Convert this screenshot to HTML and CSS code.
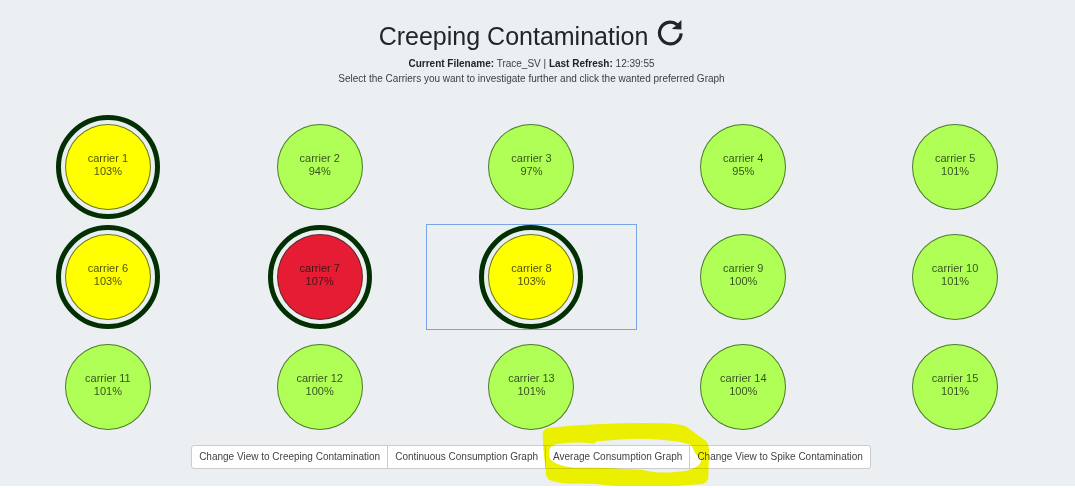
FILE: index.html
```html
<!DOCTYPE html>
<html lang="en">
<head>
<meta charset="utf-8">
<meta name="viewport" content="width=device-width, initial-scale=1">
<title>Creeping Contamination</title>
<link rel="stylesheet" href="styles.css">
</head>
<body>
<main class="page">
  <header class="header">
    <div class="title-row">
      <h1 class="title">Creeping Contamination</h1>
      <button class="refresh" type="button" aria-label="Refresh">
        <svg class="refresh-icon" viewBox="0 0 28 28" width="28" height="28" aria-hidden="true">
          <path d="M21.2 6.7A10.8 10.8 0 1 0 25.1 15.4" fill="none" stroke="#212529" stroke-width="3.2"/>
          <path d="M25.4 2V11.4L16 11Q17 9.5 19.5 8.2L21.8 5.4Z" fill="#212529"/>
        </svg>
      </button>
    </div>
    <p class="line"><b>Current Filename:</b> Trace_SV | <b>Last Refresh:</b> 12:39:55</p>
    <p class="line">Select the Carriers you want to investigate further and click the wanted preferred Graph</p>
  </header>
  <section class="carriers" aria-label="Carriers">
    <button class="carrier" type="button" aria-pressed="true"><span class="ring"><span class="disc warn">carrier 1<br>103%</span></span></button>
    <button class="carrier" type="button" aria-pressed="false"><span class="ring"><span class="disc">carrier 2<br>94%</span></span></button>
    <button class="carrier" type="button" aria-pressed="false"><span class="ring"><span class="disc">carrier 3<br>97%</span></span></button>
    <button class="carrier" type="button" aria-pressed="false"><span class="ring"><span class="disc">carrier 4<br>95%</span></span></button>
    <button class="carrier" type="button" aria-pressed="false"><span class="ring"><span class="disc">carrier 5<br>101%</span></span></button>
    <button class="carrier" type="button" aria-pressed="true"><span class="ring"><span class="disc warn">carrier 6<br>103%</span></span></button>
    <button class="carrier" type="button" aria-pressed="true"><span class="ring"><span class="disc alarm">carrier 7<br>107%</span></span></button>
    <button class="carrier focused" type="button" aria-pressed="true"><span class="ring"><span class="disc warn">carrier 8<br>103%</span></span></button>
    <button class="carrier" type="button" aria-pressed="false"><span class="ring"><span class="disc">carrier 9<br>100%</span></span></button>
    <button class="carrier" type="button" aria-pressed="false"><span class="ring"><span class="disc">carrier 10<br>101%</span></span></button>
    <button class="carrier" type="button" aria-pressed="false"><span class="ring"><span class="disc">carrier 11<br>101%</span></span></button>
    <button class="carrier" type="button" aria-pressed="false"><span class="ring"><span class="disc">carrier 12<br>100%</span></span></button>
    <button class="carrier" type="button" aria-pressed="false"><span class="ring"><span class="disc">carrier 13<br>101%</span></span></button>
    <button class="carrier" type="button" aria-pressed="false"><span class="ring"><span class="disc">carrier 14<br>100%</span></span></button>
    <button class="carrier" type="button" aria-pressed="false"><span class="ring"><span class="disc">carrier 15<br>101%</span></span></button>
  </section>
  <nav class="actions" aria-label="Graphs">
    <button class="action" type="button">Change View to Creeping Contamination</button>
    <button class="action" type="button">Continuous Consumption Graph</button>
    <div class="marked">
      <button class="action" type="button">Average Consumption Graph</button>
      <svg class="marker" viewBox="36 24 504 195" width="168" height="65" aria-hidden="true">
        <path fill="#eef200" fill-rule="evenodd" d="M38 52Q42 40 60 38Q130 31 200 28Q310 22 400 25Q445 26 467 34Q500 58 528 78Q538 88 537 115L535 188Q532 205 510 208Q440 213 380 217Q310 217 250 212Q180 204 120 206Q75 205 55 193Q45 183 48 165Q38 105 38 52ZM57 112Q59 92 77 88Q130 78 192 86L200 79Q270 72 330 71Q390 72 430 78Q468 82 486 93Q495 120 512 132Q517 142 504 152Q480 168 445 170Q400 175 365 170Q325 161 290 163Q250 158 200 158Q145 160 110 155Q75 148 63 135Q56 126 57 112Z"/>
      </svg>
    </div>
    <button class="action" type="button">Change View to Spike Contamination</button>
  </nav>
</main>
</body>
</html>
```
FILE: styles.css
```css
body {
  margin: 0;
  background: #fff;
  color: #212529;
  font: 10px/15px "Liberation Sans", Arial, sans-serif;
}

button {
  font: inherit;
  color: inherit;
  cursor: pointer;
}

.page {
  padding: 18px 14px 17px 2px;
  background: #ebeff2;
}

.header {
  margin-bottom: 28px;
  text-align: center;
}

.title-row {
  display: flex;
  justify-content: center;
  gap: 8px;
  margin-bottom: 2px;
}

.title {
  margin: 0;
  font-size: 25px;
  font-weight: 400;
  line-height: 36px;
}

.refresh {
  height: 28px;
  padding: 0;
  border: 0;
  background: none;
}

.refresh-icon {
  display: block;
}

.line {
  margin: 0;
  color: #3c4043;
}

.line b {
  color: #212529;
}

.carriers {
  display: grid;
  grid-template-columns: repeat(5, 1fr);
  row-gap: 4px;
}

.carrier {
  display: flex;
  justify-content: center;
  padding: 1px;
  border: 0;
  background: none;
  font-size: 11px;
  line-height: 13px;
}

.focused {
  outline: 1px solid #78a5e8;
  outline-offset: -1px;
}

.ring {
  padding: 4px;
  border: 5px solid transparent;
  border-radius: 50%;
}

.carrier[aria-pressed="true"] .ring {
  border-color: #033003;
}

.disc {
  display: flex;
  flex-direction: column;
  justify-content: center;
  box-sizing: border-box;
  width: 86px;
  height: 86px;
  padding-bottom: 4px;
  border: 1px solid rgba(25, 50, 25, 0.65);
  border-radius: 50%;
  background: #b0ff57;
  color: rgba(10, 20, 10, 0.75);
}

.warn {
  background: #ff0;
}

.alarm {
  background: #e51c34;
}

.actions {
  display: flex;
  justify-content: center;
  margin-top: 5px;
}

.action {
  margin-left: -1px;
  padding: 3px 7px 4px;
  border: 1px solid #ccc;
  background: #fff;
  color: #444;
  white-space: nowrap;
}

.action:first-child {
  border-radius: 3px 0 0 3px;
}

.marked .action {
  border-radius: 0;
}

.actions > .action:last-child {
  border-radius: 0 3px 3px 0;
}

.marked {
  display: flex;
  position: relative;
}

.marker {
  position: absolute;
  z-index: 1;
  top: -22px;
  left: -4px;
  mix-blend-mode: darken;
  pointer-events: none;
}
```
